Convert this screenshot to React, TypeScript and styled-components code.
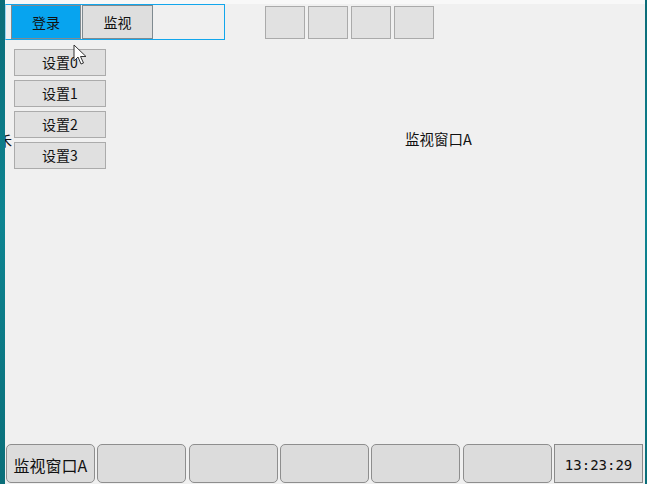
import React from "react";
import styled, { createGlobalStyle } from "styled-components";

const Global = createGlobalStyle`
  html, body { margin: 0; padding: 0; }
  body {
    width: 647px;
    height: 484px;
    overflow: hidden;
    background: linear-gradient(180deg, #0b6c78 0%, #0d8491 45%, #0a6e79 100%);
    font-family: "Noto Sans CJK SC", "Noto Sans", sans-serif;
  }
`;

const Desktop = styled.div`
  display: flex;
  height: 484px;
  padding-left: 5px;
`;

const Screen = styled.div`
  position: relative;
  width: 640px;
  height: 484px;
  background: #f0f0f0;
  display: flex;
  flex-direction: column;
  overflow: hidden;
  border-top: 4px solid #f8f8f8;
  box-sizing: border-box;
`;

const Header = styled.div`
  display: flex;
  align-items: flex-start;
  height: 36px;
`;

const NavFrame = styled.div`
  box-sizing: border-box;
  width: 220px;
  height: 36px;
  border: 1px solid #12a6ec;
  border-left-color: #9ad6f3;
  display: flex;
  gap: 1px;
  padding-left: 5px;
`;

const NavButton = styled.button<{ $active?: boolean; $w: number }>`
  box-sizing: border-box;
  width: ${(p) => p.$w}px;
  height: 34px;
  margin: 0;
  padding: 0;
  border: 1px solid #7f8a90;
  background: ${(p) => (p.$active ? "#07a4ef" : "#dedede")};
  color: #111;
  font-family: "Noto Sans CJK SC", sans-serif;
  font-size: 14px;
  line-height: 32px;
`;

const BoxRow = styled.div`
  display: flex;
  gap: 3px;
  margin-left: 40px;
  margin-top: 2px;
`;

const EmptyBox = styled.div`
  box-sizing: border-box;
  width: 40px;
  height: 33px;
  background: #e1e1e1;
  border: 1px solid #aaaaaa;
`;

const Body = styled.div`
  position: relative;
  flex: 1;
  display: flex;
  align-items: flex-start;
`;

const SettingsColumn = styled.div`
  display: flex;
  flex-direction: column;
  gap: 4px;
  margin-left: 9px;
  margin-top: 9px;
`;

const SettingButton = styled.button`
  box-sizing: border-box;
  width: 92px;
  height: 27px;
  margin: 0;
  padding: 0;
  background: #e0e0e0;
  border: 1px solid #ababab;
  color: #111;
  font-family: "Noto Sans CJK SC", sans-serif;
  font-size: 14px;
  line-height: 25px;
`;

const WindowLabel = styled.div`
  margin-left: 299px;
  margin-top: 90px;
  font-size: 14.5px;
  line-height: 18px;
  color: #111;
`;

const ClippedGlyph = styled.span`
  position: absolute;
  left: -7px;
  top: 91px;
  font-size: 14px;
  line-height: 18px;
  color: #111;
`;

const Footer = styled.div`
  display: grid;
  grid-template-columns: repeat(7, 1fr);
  gap: 2.5px;
  padding: 0 2px 1px 1px;
  height: 39px;
  box-sizing: content-box;
`;

const Tab = styled.div<{ $square?: boolean }>`
  box-sizing: border-box;
  height: 39px;
  background: #dcdcdc;
  border: 1px solid ${(p) => (p.$square ? "#8a8a8a" : "#8e8e8e")};
  border-radius: ${(p) => (p.$square ? "0" : "5px")};
  display: flex;
  align-items: center;
  justify-content: center;
  color: #111;
  font-size: ${(p) => (p.$square ? "14px" : "16px")};
  font-family: ${(p) =>
    p.$square
      ? '"DejaVu Sans Mono", "Liberation Mono", monospace'
      : '"Noto Sans CJK SC", sans-serif'};
  padding-top: 2px;
`;

const Cursor = styled.svg`
  position: absolute;
  left: 68px;
  top: 40px;
  pointer-events: none;
`;

export default function App() {
  const tabs = ["监视窗口A", "", "", "", "", ""];
  return (
    <>
      <Global />
      <Desktop>
        <Screen>
          <Header>
            <NavFrame>
              <NavButton $active $w={70}>登录</NavButton>
              <NavButton $w={71}>监视</NavButton>
            </NavFrame>
            <BoxRow>
              {[0, 1, 2, 3].map((i) => (
                <EmptyBox key={i} />
              ))}
            </BoxRow>
          </Header>
          <Body>
            <ClippedGlyph>禾</ClippedGlyph>
            <SettingsColumn>
              {[0, 1, 2, 3].map((i) => (
                <SettingButton key={i}>设置{i}</SettingButton>
              ))}
            </SettingsColumn>
            <WindowLabel>监视窗口A</WindowLabel>
          </Body>
          <Footer>
            {tabs.map((t, i) => (
              <Tab key={i}>{t}</Tab>
            ))}
            <Tab $square>13:23:29</Tab>
          </Footer>
          <Cursor width="14" height="22" viewBox="0 0 14 22">
            <path
              d="M1 1 L1 17 L5 13 L8 20 L10.5 19 L7.5 12.5 L13 12.5 Z"
              fill="#ffffff"
              stroke="#333"
              strokeWidth="1"
              strokeLinejoin="round"
            />
          </Cursor>
        </Screen>
      </Desktop>
    </>
  );
}
